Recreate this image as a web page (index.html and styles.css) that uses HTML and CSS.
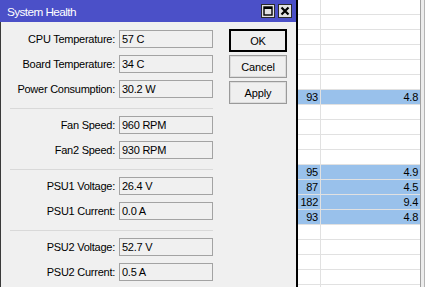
FILE: index.html
```html
<!DOCTYPE html>
<html lang="en">

<head>
    <meta charset="UTF-8">
    <meta name="viewport" content="width=device-width, initial-scale=1.0">
    <title>System Health</title>
    <link rel="stylesheet" href="styles.css">
</head>

<body>
    <div class="screen">
        <div class="dialog">
            <div class="titlebar">
                <span class="title">System Health</span>
                <div class="title-buttons">
                    <span class="tbtn">
                        <svg width="10" height="10" viewBox="0 0 10 10">
                            <rect x="1" y="1" width="8" height="8" fill="none" stroke="#000" stroke-width="1.4" />
                            <rect x="1" y="1" width="8" height="2" fill="#000" />
                        </svg>
                    </span>
                    <span class="tbtn">
                        <svg width="10" height="10" viewBox="0 0 10 10">
                            <path d="M1.5 1.5 L8.5 8.5 M8.5 1.5 L1.5 8.5" stroke="#000" stroke-width="2.2" />
                        </svg>
                    </span>
                </div>
            </div>
            <div class="content">
                <div class="form">
                    <div class="group">
                        <div class="field"><span class="label">CPU Temperature:</span><span class="value">57 C</span></div>
                        <div class="field"><span class="label">Board Temperature:</span><span class="value">34 C</span></div>
                        <div class="field"><span class="label">Power Consumption:</span><span class="value">30.2 W</span></div>
                    </div>
                    <div class="sep"></div>
                    <div class="group">
                        <div class="field"><span class="label">Fan Speed:</span><span class="value">960 RPM</span></div>
                        <div class="field"><span class="label">Fan2 Speed:</span><span class="value">930 RPM</span></div>
                    </div>
                    <div class="sep"></div>
                    <div class="group">
                        <div class="field"><span class="label">PSU1 Voltage:</span><span class="value">26.4 V</span></div>
                        <div class="field"><span class="label">PSU1 Current:</span><span class="value">0.0 A</span></div>
                    </div>
                    <div class="sep"></div>
                    <div class="group">
                        <div class="field"><span class="label">PSU2 Voltage:</span><span class="value">52.7 V</span></div>
                        <div class="field"><span class="label">PSU2 Current:</span><span class="value">0.5 A</span></div>
                    </div>
                </div>
                <div class="actions">
                    <button class="btn default">OK</button>
                    <button class="btn">Cancel</button>
                    <button class="btn">Apply</button>
                </div>
            </div>
        </div>

        <div class="table">
            <div class="row"><span></span><span></span></div>
            <div class="row"><span></span><span></span></div>
            <div class="row"><span></span><span></span></div>
            <div class="row"><span></span><span></span></div>
            <div class="row"><span></span><span></span></div>
            <div class="row"><span></span><span></span></div>
            <div class="row selected"><span>93</span><span>4.8</span></div>
            <div class="row"><span></span><span></span></div>
            <div class="row"><span></span><span></span></div>
            <div class="row"><span></span><span></span></div>
            <div class="row"><span></span><span></span></div>
            <div class="row selected"><span>95</span><span>4.9</span></div>
            <div class="row selected"><span>87</span><span>4.5</span></div>
            <div class="row selected"><span>182</span><span>9.4</span></div>
            <div class="row selected"><span>93</span><span>4.8</span></div>
            <div class="row"><span></span><span></span></div>
            <div class="row"><span></span><span></span></div>
            <div class="row"><span></span><span></span></div>
            <div class="row"><span></span><span></span></div>
            <div class="row"><span></span><span></span></div>
        </div>
        <div class="scroll"></div>
    </div>
</body>

</html>
```

FILE: styles.css
```css
* {
    box-sizing: border-box;
}

body {
    margin: 0;
    overflow: hidden;
    background-color: #ffffff;
    font-family: "Liberation Sans", Arial, sans-serif;
    font-size: 11px;
    letter-spacing: -0.25px;
    color: #000000;
}

.screen {
    display: flex;
    width: 425px;
    height: 287px;
}

/* dialog */

.dialog {
    flex: none;
    width: 298px;
    display: flex;
    flex-direction: column;
    background-color: #f0f0f0;
    border-right: 2px solid #000000;
}

.titlebar {
    height: 22px;
    display: flex;
    align-items: center;
    justify-content: space-between;
    padding: 0 4px 0 7px;
    background-color: #4b50c8;
}

.title {
    color: #ffffff;
    font-size: 11.8px;
    letter-spacing: -0.6px;
    padding-top: 1px;
}

.title-buttons {
    display: flex;
    gap: 3px;
}

.tbtn {
    width: 14px;
    height: 14px;
    display: grid;
    place-content: center;
    background-color: #e2e2e2;
    border: 1px solid #2a2a2a;
}

.tbtn svg {
    display: block;
}

.content {
    flex: 1;
    display: flex;
    padding: 8px 0 0 9px;
    border-left: 1px solid #3a3a3a;
}

.form {
    width: 203px;
}

.group {
    display: grid;
    gap: 7px;
}

.field {
    display: flex;
    align-items: center;
    gap: 4px;
}

.label {
    width: 105px;
    text-align: right;
    white-space: nowrap;
}

.value {
    width: 94px;
    height: 18px;
    line-height: 16px;
    padding-left: 2px;
    border: 1px solid #a3a3a3;
    background-color: #f0f0f0;
}

.sep {
    height: 1px;
    margin: 10px 0 7px;
    background-color: #d9d9d9;
}

.actions {
    display: grid;
    align-content: start;
    gap: 3px;
    margin: -1px 0 0 16px;
}

.btn {
    width: 58px;
    height: 23px;
    padding: 0;
    font-family: inherit;
    font-size: 11px;
    letter-spacing: -0.1px;
    color: #000000;
    background-color: #efefef;
    border: 1px solid #9a9a9a;
    box-shadow: inset 0 0 0 1px #dcdcdc;
}

.btn.default {
    border-color: #000000;
    box-shadow: inset 0 0 0 1px #000000;
}

/* list behind the dialog */

.table {
    flex: none;
    width: 122px;
    background-color: #ffffff;
}

.row {
    display: grid;
    grid-template-columns: 23px 1fr;
    height: 15px;
}

.row span {
    line-height: 14px;
    padding-right: 2px;
    text-align: right;
    border-bottom: 1px solid #e1e1e1;
}

.row span:first-child {
    border-right: 1px solid #e1e1e1;
}

.row.selected span {
    background-color: #99c1eb;
}

.scroll {
    flex: 1;
    border-left: 1px solid #a0a0a0;
    border-right: 1px solid #b4b4b4;
    background-color: #ececec;
}
```
